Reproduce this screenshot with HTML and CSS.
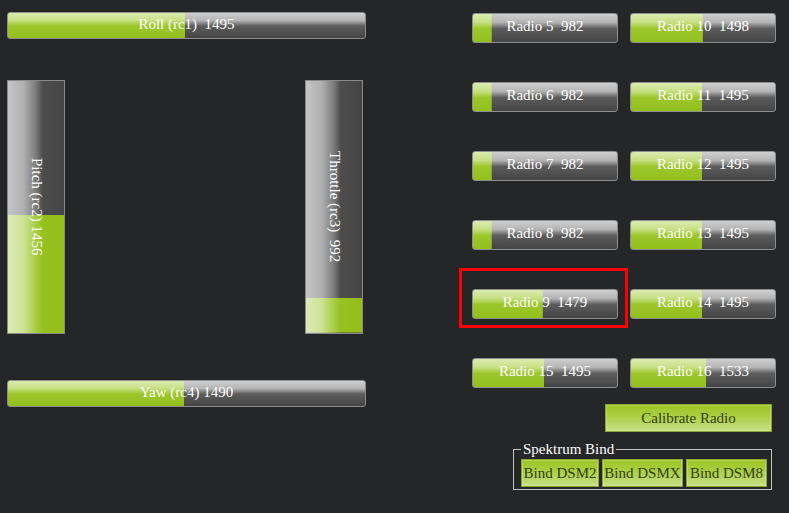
FILE: index.html
```html
<!DOCTYPE html>
<html>
<head>
<meta charset="utf-8">
<link rel="stylesheet" href="styles.css">
</head>
<body>
<div class="app">
  <div class="sticks">
    <div class="hbar wide" style="--p:49.6%"><span>Roll (rc1)  1495</span></div>
    <div class="vrow">
      <div class="vbar" style="--p:46.9%"><span>Pitch (rc2) 1456</span></div>
      <div class="vbar" style="--p:13.7%"><span>Throttle (rc3)  992</span></div>
    </div>
    <div class="hbar wide yaw" style="--p:49.3%"><span>Yaw (rc4) 1490</span></div>
  </div>
  <div class="side">
    <div class="radios">
      <div class="hbar radio" style="--p:13%"><span>Radio 5  982</span></div>
      <div class="hbar radio" style="--p:49.9%"><span>Radio 10  1498</span></div>
      <div class="hbar radio" style="--p:13%"><span>Radio 6  982</span></div>
      <div class="hbar radio" style="--p:49.6%"><span>Radio 11  1495</span></div>
      <div class="hbar radio" style="--p:13%"><span>Radio 7  982</span></div>
      <div class="hbar radio" style="--p:49.6%"><span>Radio 12  1495</span></div>
      <div class="hbar radio" style="--p:13%"><span>Radio 8  982</span></div>
      <div class="hbar radio" style="--p:49.6%"><span>Radio 13  1495</span></div>
      <div class="highlight"><div class="hbar radio" style="--p:48.5%"><span>Radio 9  1479</span></div></div>
      <div class="hbar radio" style="--p:49.6%"><span>Radio 14  1495</span></div>
      <div class="hbar radio" style="--p:49.6%"><span>Radio 15  1495</span></div>
      <div class="hbar radio" style="--p:52.4%"><span>Radio 16  1533</span></div>
    </div>
    <button class="gbtn calibrate">Calibrate Radio</button>
    <fieldset class="bind">
      <legend>Spektrum Bind</legend>
      <div class="bind-row">
        <button class="gbtn b1">Bind DSM2</button>
        <button class="gbtn b2">Bind DSMX</button>
        <button class="gbtn b3">Bind DSM8</button>
      </div>
    </fieldset>
  </div>
</div>
</body>
</html>
```

FILE: styles.css
```css
html, body {
  margin: 0;
  padding: 0;
  background: #252628;
  width: 789px;
  height: 513px;
  overflow: hidden;
}

body {
  font-family: "Liberation Serif", "DejaVu Serif", serif;
  font-size: 15px;
  color: #ffffff;
}

.app {
  display: flex;
  justify-content: space-between;
  padding: 12px 14px 0 7px;
}

.sticks {
  width: 359px;
  display: flex;
  flex-direction: column;
}

.hbar {
  box-sizing: border-box;
  border: 1px solid #8e8e8e;
  border-radius: 3px;
  display: flex;
  align-items: center;
  justify-content: center;
  white-space: pre;
  line-height: 1;
  background:
    linear-gradient(to bottom, #dcecb2 0%, #c6e082 30%, #9cc62a 52%, #94c01e 100%) 0 0 / var(--p) 100% no-repeat,
    linear-gradient(to bottom, #cfcfcf 0%, #b4b4b4 30%, #5c5c5c 52%, #444444 100%);
}

.hbar span {
  position: relative;
  top: -1px;
}

.wide {
  height: 27px;
}

.yaw {
  margin-top: 46px;
}

.vrow {
  display: flex;
  justify-content: space-between;
  padding-right: 3px;
  margin-top: 41px;
}

.vbar {
  box-sizing: border-box;
  width: 58px;
  height: 254px;
  border: 1px solid #8a8a8a;
  display: flex;
  align-items: center;
  justify-content: center;
  white-space: pre;
  background:
    linear-gradient(to right, #dcebb4 0%, #cde394 28%, #a8cc44 50%, #96c11e 62%, #93be1c 100%) 0 100% / 100% var(--p) no-repeat,
    linear-gradient(to right, #c6c6c6 0%, #b0b0b0 28%, #7a7a7a 50%, #4c4c4c 62%, #454545 100%);
}

.vbar span {
  writing-mode: vertical-rl;
  line-height: 1;
}

.side {
  width: 303px;
  padding-top: 1px;
  display: flex;
  flex-direction: column;
  align-items: flex-end;
}

.radios {
  display: grid;
  grid-template-columns: 146px 146px;
  grid-auto-rows: 30px;
  column-gap: 12px;
  row-gap: 39px;
  width: 303px;
}

.radio {
  height: 30px;
}

.radio span {
  top: -2px;
}

.highlight {
  margin: -21px -10px -9px -13px;
  border: 3px solid #ff0000;
  padding: 18px 7px 6px 10px;
  height: 30px;
  position: relative;
}

.gbtn {
  box-sizing: border-box;
  font-family: "Liberation Serif", "DejaVu Serif", serif;
  font-size: 15px;
  color: #33400e;
  border: 1px solid #86a62c;
  border-radius: 0;
  padding: 0;
  background: linear-gradient(to bottom, #9cc622 0%, #a9ce42 40%, #c6e087 100%);
  box-shadow: inset 0 0 0 1px rgba(220, 240, 170, 0.35);
  line-height: 1;
}

.calibrate {
  width: 167px;
  height: 28px;
  margin-top: 16px;
  margin-right: 3px;
}

.bind {
  box-sizing: border-box;
  width: 259px;
  margin: 9px 3px 0 0;
  padding: 2px 4px 2px 7px;
  border: 1px solid #c4c4c4;
  min-width: 0;
}

.bind legend {
  color: #ffffff;
  font-size: 15px;
  line-height: 16px;
  padding: 0 2px;
}

.bind-row {
  display: flex;
  gap: 3px;
}

.bind-row .gbtn {
  height: 28px;
}

.b1 { width: 78px; }
.b2 { width: 81px; }
.b3 { width: 81px; }
```
